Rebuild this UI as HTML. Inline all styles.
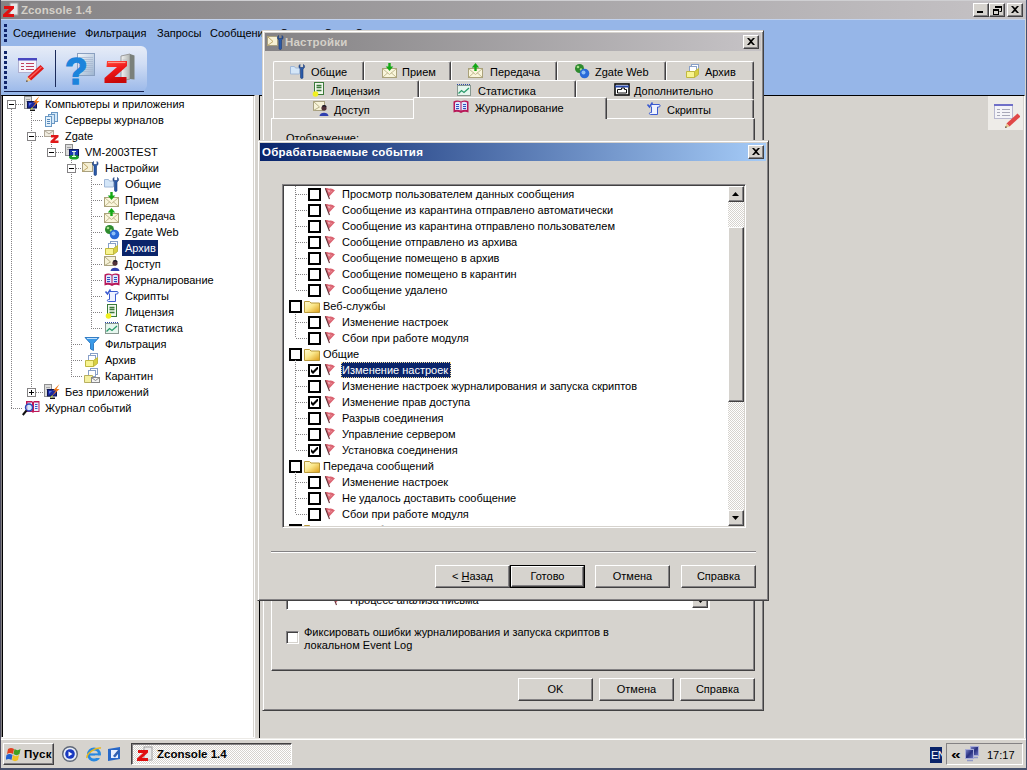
<!DOCTYPE html>
<html lang="ru"><head><meta charset="utf-8"><title>Zconsole 1.4</title>
<style>
html,body{margin:0;padding:0}
body{width:1027px;height:770px;overflow:hidden;position:relative;background:#d6d3ce;font-family:"Liberation Sans",sans-serif;font-size:11px;color:#000}
body div{position:absolute;box-sizing:border-box}
.t{white-space:nowrap;line-height:16px;height:16px}
.ic{line-height:0}
.ic svg{display:block}
.win{background:#d6d3ce;border:1px solid;border-color:#d6d3ce #424142 #424142 #d6d3ce;box-shadow:inset 1px 1px 0 #ffffff, inset -1px -1px 0 #848284;}
.btn{background:#d6d3ce;border:1px solid;border-color:#ffffff #424142 #424142 #ffffff;box-shadow:inset -1px -1px 0 #848284;text-align:center;line-height:20px;white-space:nowrap}
.btn.def{border-color:#000;box-shadow:none}
.btn.def .btnin{left:0;top:0;right:0;bottom:0;border:1px solid;border-color:#ffffff #424142 #424142 #ffffff;box-shadow:inset -1px -1px 0 #848284;line-height:18px}
.capbtn{background:#d6d3ce;border:1px solid;border-color:#ffffff #424142 #424142 #ffffff;box-shadow:inset -1px -1px 0 #848284;}
.capbtn svg{position:absolute;left:3px;top:2px}
.tab{background:#d6d3ce;border:1px solid;border-color:#ffffff #424142 transparent #ffffff;border-bottom:none;border-radius:2px 2px 0 0;box-shadow:inset -1px 0 0 #848284;}
.tab.sel{z-index:2}
.exp{width:9px;height:9px;border:1px solid #848284;background:#fff;z-index:1}
.exp .h{position:absolute;left:1px;top:3px;width:5px;height:1px;background:#000}
.exp .v{position:absolute;left:3px;top:1px;width:1px;height:5px;background:#000}
.hd{height:1px;background-image:linear-gradient(90deg,#848284 50%,transparent 50%);background-size:2px 1px}
.vd{width:1px;background-image:linear-gradient(180deg,#848284 50%,transparent 50%);background-size:1px 2px}
.grip{width:3px;background-image:linear-gradient(180deg,#10246a 0,#10246a 3px,transparent 3px);background-size:3px 5px}
.cb{width:13px;height:13px;border:2px solid #000;background:#fff}
.clip{overflow:hidden}
</style></head>
<body>
<div style="left:0px;top:0px;width:1027px;height:19px;background:linear-gradient(90deg,#848284 0%,#c6c3c6 100%);"></div>
<div style="left:0px;top:0px;width:1027px;height:1px;background:#cfcfd2"></div>
<div class="ic" style="left:3px;top:2px"><svg width="16" height="16" viewBox="0 0 16 16"><rect x="7" y="1" width="8" height="12" fill="#e8e8e8" stroke="#a0a0a0"/><path d="M1 4h10v2.500l-6 5.500h6v3H0v-2.500l6-5.500H1z" fill="#e01010"/></svg></div>
<div class="t" style="left:21px;top:2px;color:#d4d0c8;font-weight:bold;font-size:11.5px;letter-spacing:0.1px">Zconsole 1.4</div>
<div class="capbtn" style="left:973px;top:3px;width:16px;height:14px"><svg width="8" height="7" viewBox="0 0 8 7"><rect x="0" y="5" width="6" height="2" fill="#000"/></svg></div>
<div class="capbtn" style="left:989px;top:3px;width:16px;height:14px"><svg width="9" height="9" viewBox="0 0 9 9"><path d="M2.500 0.500h6v5h-2" fill="none" stroke="#000"/><path d="M2 1h7" stroke="#000" stroke-width="2"/><rect x="0.500" y="3.500" width="5" height="5" fill="none" stroke="#000"/><path d="M0 4h6" stroke="#000" stroke-width="2"/></svg></div>
<div class="capbtn" style="left:1007px;top:3px;width:16px;height:14px"><svg width="8" height="7" viewBox="0 0 8 7"><path d="M0 0h2l2 2l2-2h2l-3 3.500l3 3.500h-2l-2-2l-2 2h-2l3-3.500z" fill="#000"/></svg></div>
<div style="left:0px;top:19px;width:1025px;height:76px;background:#96b6e8"></div>
<div style="left:1025px;top:20px;width:2px;height:720px;background:#d6d3ce"></div>
<div class="grip" style="left:4px;top:24px;height:20px"></div>
<div class="t" style="left:13px;top:25px;color:#000">Соединение</div>
<div class="t" style="left:85px;top:25px;color:#000">Фильтрация</div>
<div class="t" style="left:157px;top:25px;color:#000">Запросы</div>
<div class="t" style="left:210px;top:25px;color:#000">Сообщения</div>
<div class="t" style="left:280px;top:25px;color:#000">Сервис</div>
<div class="t" style="left:324px;top:25px;color:#000">Окно</div>
<div class="t" style="left:355px;top:25px;color:#000">Справка</div>
<div style="left:1px;top:46px;width:146px;height:45px;border-radius:0 6px 6px 0;background:linear-gradient(180deg,#e6ecf7 0%,#d0ddf4 40%,#b6cbee 70%,#9dbaea 100%);"></div>
<div style="left:4px;top:91px;width:140px;height:1px;background:#14204e"></div>
<div class="grip" style="left:4px;top:51px;height:40px"></div>
<div style="left:55px;top:50px;width:1px;height:37px;background:#1a2a5a"></div>
<div class="ic" style="left:16px;top:56px"><svg width="30" height="28" viewBox="0 0 30 28"><rect x="2.500" y="2.500" width="18" height="14" fill="#f4f4fc" stroke="#b0b0d0"/><rect x="2" y="2" width="19" height="2.500" fill="#4848c0"/><path d="M5 7.500h3M10 7.500h8M5 10.500h3M10 10.500h8M5 13.500h3M10 13.500h8" stroke="#c04060" stroke-width="1.200"/><path d="M24.500 9l3.500 3.500l-13 12l-3.500-3.500z" fill="#e01818"/><path d="M25 10.500l1 1l-12 11l-1-1z" fill="#f86060"/><path d="M11.500 21l3.500 3.500l-5 1.500z" fill="#f0c890"/><path d="M10 26l0.800-2l1.200 1.200z" fill="#303030"/></svg></div>
<div class="ic" style="left:64px;top:50px"><svg width="34" height="36" viewBox="0 0 34 36"><defs><linearGradient id="pg" x1="0" y1="0" x2="1" y2="1"><stop offset="0" stop-color="#f4f8fc"/><stop offset="1" stop-color="#9cb4d0"/></linearGradient></defs><rect x="13.500" y="3.500" width="17" height="22" fill="url(#pg)" stroke="#8aa0c0"/><path d="M15 7.500h14M15 9.500h14M15 11.500h14M15 13.500h14M15 15.500h14M15 17.500h14M15 19.500h14M15 21.500h14" stroke="#a8b8d0" stroke-width="0.800"/><text x="1" y="34" font-family="Liberation Sans, sans-serif" font-weight="bold" font-size="37" fill="#1c84dc" stroke="#1c84dc" stroke-width="1.300">?</text></svg></div>
<div class="ic" style="left:103px;top:52px"><svg width="34" height="34" viewBox="0 0 34 34"><defs><linearGradient id="sg" x1="0" y1="0" x2="1" y2="0"><stop offset="0" stop-color="#f4f4f4"/><stop offset="1" stop-color="#b0b4b0"/></linearGradient><linearGradient id="zg" x1="0" y1="0" x2="0.300" y2="1"><stop offset="0" stop-color="#ff4a3a"/><stop offset="0.500" stop-color="#f01818"/><stop offset="1" stop-color="#c80808"/></linearGradient></defs><path d="M18 4l9-2v25l-9 2z" fill="url(#sg)" stroke="#9a9a9a"/><path d="M27 2l4.500 1.500v24l-4.500-0.500z" fill="#7a807a"/><path d="M19.500 8h6M19.500 11h6M19.500 14h6M19.500 17h6" stroke="#c0c4c8"/><path d="M4 9h20v5l-12.500 11h12v6H1.500v-5l12.500-11H3.500z" fill="url(#zg)"/><path d="M5 10.500h17.500" stroke="#ff9a8a" stroke-width="1.200"/></svg></div>
<div style="left:0px;top:95px;width:255px;height:643px;background:#fff;border:1px solid #848284;border-top-color:#000;border-left-width:2px;border-right-color:#ffffff;border-bottom-color:#ffffff;box-shadow:inset 1px 0 0 #000, inset -1px 0 0 #d6d3ce;"></div>
<div style="left:0px;top:19px;width:1025px;height:1px;background:#c3d3ee"></div>
<div style="left:0px;top:0px;width:1px;height:770px;background:#4a4a5c;z-index:5"></div>
<div class="hd" style="left:16px;top:104px;width:7px"></div>
<div class="ic" style="left:24px;top:96px"><svg width="16" height="16" viewBox="0 0 16 16"><rect x="0.500" y="0.500" width="7" height="12" fill="#dcdcdc" stroke="#909090"/><path d="M2 3.500h4M2 5.500h4" stroke="#a8a8a8"/><rect x="3.500" y="5.500" width="9" height="6.500" fill="#1828a0" stroke="#0c1450"/><path d="M5 7l3 0l-3 3z" fill="#5a78e0"/><path d="M6 13.500h5v1.500H6z" fill="#181818"/><path d="M15.500 0l-6.500 6.500h3l-4.500 6l8-7.500h-3z" fill="#f07818"/><path d="M8.500 11.500l-1.500 2" stroke="#c8e040" stroke-width="1.200"/></svg></div>
<div class="t" style="left:45px;top:96px;">Компьютеры и приложения</div>
<div class="exp" style="left:7px;top:100px"><i class="h"></i></div>
<div class="hd" style="left:31px;top:120px;width:12px"></div>
<div class="ic" style="left:44px;top:112px"><svg width="16" height="16" viewBox="0 0 16 16"><rect x="7.500" y="0.500" width="6" height="9" fill="#d4e8f8" stroke="#6a98c4"/><rect x="4.500" y="2.500" width="6" height="9" fill="#d4e8f8" stroke="#6a98c4"/><rect x="1.500" y="4.500" width="6" height="10" fill="#e4f2fc" stroke="#6a98c4"/><path d="M3 7.500h3M3 9.500h3M3 11.500h3" stroke="#5888b8"/></svg></div>
<div class="t" style="left:65px;top:112px;">Серверы журналов</div>
<div class="hd" style="left:36px;top:136px;width:7px"></div>
<div class="ic" style="left:44px;top:128px"><svg width="16" height="16" viewBox="0 0 16 16"><rect x="0.500" y="2.500" width="9" height="6" fill="#f0ece0" stroke="#b0a898"/><path d="M0.500 2.500l4.500 3.500l4.500-3.500" fill="none" stroke="#b0a898"/><path d="M7 7h7.500v2l-4 3.500h4v2.500h-8v-2l4-3.500H7z" fill="#e01818"/></svg></div>
<div class="t" style="left:65px;top:128px;">Zgate</div>
<div class="exp" style="left:27px;top:132px"><i class="h"></i></div>
<div class="hd" style="left:56px;top:152px;width:7px"></div>
<div class="ic" style="left:64px;top:144px"><svg width="16" height="16" viewBox="0 0 16 16"><rect x="1.500" y="0.500" width="7" height="11" fill="#dcdcdc" stroke="#8c8c8c"/><path d="M3 3.500h4M3 5.500h4" stroke="#a0a0a0"/><rect x="5.500" y="5.500" width="9" height="6.500" fill="#1838b0" stroke="#0c1858"/><ellipse cx="10" cy="13.300" rx="4.800" ry="2.300" fill="#18a028"/><path d="M10 7.500v5M8 7.500h4M8 12.500h4" stroke="#e8ffe8" stroke-width="1.200"/></svg></div>
<div class="t" style="left:85px;top:144px;">VM-2003TEST</div>
<div class="exp" style="left:47px;top:148px"><i class="h"></i></div>
<div class="hd" style="left:76px;top:168px;width:7px"></div>
<div class="ic" style="left:82px;top:160px"><svg width="18" height="16" viewBox="0 0 18 16"><rect x="0.500" y="2.500" width="10" height="9" fill="#f6f0d4" stroke="#a8a080"/><path d="M0.500 2.500l5.500 5M0.500 11.500l5.500-4" fill="none" stroke="#c0a868"/><path d="M11.500 1.500c-1.500 1-1.500 3.500 0.500 4.500v8.500c0 1.300 2.500 1.300 2.500 0v-8.500c2-1 2-3.500 0.500-4.500v3h-3.500z" fill="#2a5aa8" stroke="#1a3a78" stroke-width="0.600"/></svg></div>
<div class="t" style="left:105px;top:160px;">Настройки</div>
<div class="exp" style="left:67px;top:164px"><i class="h"></i></div>
<div class="hd" style="left:91px;top:184px;width:12px"></div>
<div class="ic" style="left:104px;top:176px"><svg width="16" height="16" viewBox="0 0 16 16"><path d="M0.500 3.500h4l1 1.500h4v6h-9z" fill="#d4e6f8" stroke="#a0b8d8"/><path d="M10 1.500c-1.500 1-1.500 3.500 0.500 4.500v8.500c0 1.300 2.500 1.300 2.500 0v-8.500c2-1 2-3.500 0.500-4.500v3h-3.500z" fill="#2a5aa8" stroke="#1a3a78" stroke-width="0.600"/></svg></div>
<div class="t" style="left:125px;top:176px;">Общие</div>
<div class="hd" style="left:91px;top:200px;width:12px"></div>
<div class="ic" style="left:104px;top:192px"><svg width="16" height="16" viewBox="0 0 16 16"><rect x="0.500" y="5.500" width="14" height="9" fill="#faf6dc" stroke="#aaa27a"/><path d="M1 6l6.500 5.500l6.500-5.500M1 14l5-4.500M14 14l-5-4.500" fill="none" stroke="#c4bc94"/><path d="M7.500 0v5" stroke="#14a814" stroke-width="2.400"/><path d="M3.800 3.500h7.400l-3.700 4.500z" fill="#14a814"/></svg></div>
<div class="t" style="left:125px;top:192px;">Прием</div>
<div class="hd" style="left:91px;top:216px;width:12px"></div>
<div class="ic" style="left:104px;top:208px"><svg width="16" height="16" viewBox="0 0 16 16"><rect x="0.500" y="5.500" width="14" height="9" fill="#faf6dc" stroke="#aaa27a"/><path d="M1 6l6.500 5.500l6.500-5.500M1 14l5-4.500M14 14l-5-4.500" fill="none" stroke="#c4bc94"/><path d="M7.500 3v5" stroke="#14a814" stroke-width="2.400"/><path d="M3.800 4.500h7.400l-3.700-4.500z" fill="#14a814"/></svg></div>
<div class="t" style="left:125px;top:208px;">Передача</div>
<div class="hd" style="left:91px;top:232px;width:12px"></div>
<div class="ic" style="left:104px;top:224px"><svg width="16" height="16" viewBox="0 0 16 16"><circle cx="5.5" cy="5.5" r="4.5" fill="#2e8a2e"/><circle cx="4" cy="4" r="1.3" fill="#a8e08a"/><circle cx="7" cy="6.5" r="1.2" fill="#a8e08a"/><circle cx="10.5" cy="10.5" r="4.8" fill="#2a6ad8"/><circle cx="9.5" cy="9.5" r="2" fill="#8ec0f8"/></svg></div>
<div class="t" style="left:125px;top:224px;">Zgate Web</div>
<div class="hd" style="left:91px;top:248px;width:12px"></div>
<div class="ic" style="left:104px;top:240px"><svg width="16" height="16" viewBox="0 0 16 16"><rect x="6.5" y="1.5" width="7" height="6" fill="#fff" stroke="#88a0c8"/><rect x="4.5" y="3.5" width="7" height="6" fill="#fff" stroke="#88a0c8"/><path d="M1.5 8.5h8v6h-8z" fill="#f8f490" stroke="#c0b840"/><path d="M9.5 8.5l4-3v6l-4 3z" fill="#d8d040" stroke="#c0b840"/></svg></div>
<div style="left:122px;top:240px;width:36px;height:16px;background:#0a246a"></div>
<div class="t" style="left:125px;top:240px;color:#fff">Архив</div>
<div class="hd" style="left:91px;top:264px;width:12px"></div>
<div class="ic" style="left:104px;top:256px"><svg width="16" height="16" viewBox="0 0 16 16"><rect x="0.500" y="0.500" width="11" height="9" fill="#f6f2d8" stroke="#a8a080"/><path d="M0.500 0.500l6 5.500M0.500 9.500l6-3.500" fill="none" stroke="#b8b088"/><circle cx="11" cy="7" r="2.600" fill="#503038"/><path d="M9.500 5.500c1-1.500 3-1 3.500 0.500" stroke="#181828" fill="none" stroke-width="1.400"/><path d="M6.500 15c0-4.500 9-4.500 9 0z" fill="#3040b0"/></svg></div>
<div class="t" style="left:125px;top:256px;">Доступ</div>
<div class="hd" style="left:91px;top:280px;width:12px"></div>
<div class="ic" style="left:104px;top:272px"><svg width="16" height="16" viewBox="0 0 16 16"><path d="M0.500 2.500c2.500-1.500 5-1.500 7.500 0c2.500-1.500 5-1.500 7.500 0v11c-2.500-1-5-1-7.500 0.500c-2.500-1.500-5-1.500-7.500-0.500z" fill="#b81858"/><path d="M2 3.500c2-1 4-1 5.500 0v8c-1.500-1-3.500-1-5.500-0.500zM14 3.500c-2-1-4-1-5.500 0v8c1.500-1 3.500-1 5.500-0.500z" fill="#dce8ff"/><path d="M3 5.500h3M3 7.500h3M3 9.500h3M10 5.500h3M10 7.500h3M10 9.500h3" stroke="#3050c0"/></svg></div>
<div class="t" style="left:125px;top:272px;">Журналирование</div>
<div class="hd" style="left:91px;top:296px;width:12px"></div>
<div class="ic" style="left:104px;top:288px"><svg width="16" height="16" viewBox="0 0 16 16"><path d="M5 3.500h8c1.500 0 1.500 2.500 0 2.500h-1.500v7.500h-7c-1.500 0-1.500-2 0-2h1v-6" fill="#eef2ff" stroke="#3a5ad0"/><path d="M1.500 3.500l2 2.500l3-4.500" fill="none" stroke="#3a5ad0" stroke-width="1.600"/></svg></div>
<div class="t" style="left:125px;top:288px;">Скрипты</div>
<div class="hd" style="left:91px;top:312px;width:12px"></div>
<div class="ic" style="left:104px;top:304px"><svg width="16" height="16" viewBox="0 0 16 16"><rect x="3.500" y="0.500" width="9" height="12" fill="#f2f8ee" stroke="#3a7a3a"/><path d="M5.500 3.500h5M5.500 5.500h5M5.500 8.500h5" stroke="#3a7a3a" stroke-width="1.500"/><circle cx="4.500" cy="12" r="2.800" fill="#f0f020"/></svg></div>
<div class="t" style="left:125px;top:304px;">Лицензия</div>
<div class="hd" style="left:91px;top:328px;width:12px"></div>
<div class="ic" style="left:104px;top:320px"><svg width="16" height="16" viewBox="0 0 16 16"><rect x="1.500" y="3.500" width="13" height="10" fill="#e6f6ee" stroke="#889890"/><path d="M1 2.500h14" stroke="#2848a8" stroke-dasharray="1 1"/><path d="M2.500 11.500l3-3l2.500 2l5-4.500" fill="none" stroke="#2a9a6a" stroke-width="1.300"/></svg></div>
<div class="t" style="left:125px;top:320px;">Статистика</div>
<div class="hd" style="left:71px;top:344px;width:12px"></div>
<div class="ic" style="left:84px;top:336px"><svg width="16" height="16" viewBox="0 0 16 16"><path d="M1 1.500h14l-5.500 6v7l-3-1.500v-5.500z" fill="#3a9ae8" stroke="#1a6ab8" stroke-width="0.800"/><path d="M3 2.500h10" stroke="#bfe0ff"/></svg></div>
<div class="t" style="left:105px;top:336px;">Фильтрация</div>
<div class="hd" style="left:71px;top:360px;width:12px"></div>
<div class="ic" style="left:84px;top:352px"><svg width="16" height="16" viewBox="0 0 16 16"><rect x="6.5" y="1.5" width="7" height="6" fill="#fff" stroke="#88a0c8"/><rect x="4.5" y="3.5" width="7" height="6" fill="#fff" stroke="#88a0c8"/><path d="M1.5 8.5h8v6h-8z" fill="#f8f490" stroke="#c0b840"/><path d="M9.5 8.5l4-3v6l-4 3z" fill="#d8d040" stroke="#c0b840"/></svg></div>
<div class="t" style="left:105px;top:352px;">Архив</div>
<div class="hd" style="left:71px;top:376px;width:12px"></div>
<div class="ic" style="left:84px;top:368px"><svg width="16" height="16" viewBox="0 0 16 16"><rect x="6.500" y="0.500" width="7" height="6" fill="#fff" stroke="#88a0c8"/><rect x="4.500" y="2.500" width="7" height="6" fill="#fff" stroke="#88a0c8"/><path d="M0.500 7.500h8v7h-8z" fill="#f4f0a0" stroke="#b8b060"/><rect x="7.500" y="9.500" width="8" height="5" fill="#f4f4f4" stroke="#888"/><path d="M7.500 9.500l4 3l4-3" fill="none" stroke="#888"/></svg></div>
<div class="t" style="left:105px;top:368px;">Карантин</div>
<div class="hd" style="left:36px;top:392px;width:7px"></div>
<div class="ic" style="left:44px;top:384px"><svg width="16" height="16" viewBox="0 0 16 16"><rect x="0.500" y="0.500" width="7" height="12" fill="#dcdcdc" stroke="#909090"/><path d="M2 3.500h4M2 5.500h4" stroke="#a8a8a8"/><rect x="3.500" y="5.500" width="9" height="6.500" fill="#1828a0" stroke="#0c1450"/><path d="M5 7l3 0l-3 3z" fill="#5a78e0"/><path d="M6 13.500h5v1.500H6z" fill="#181818"/><path d="M15.500 0l-6.500 6.500h3l-4.500 6l8-7.500h-3z" fill="#f07818"/><path d="M8.500 11.500l-1.500 2" stroke="#c8e040" stroke-width="1.200"/></svg></div>
<div class="t" style="left:65px;top:384px;">Без приложений</div>
<div class="exp" style="left:27px;top:388px"><i class="h"></i><i class="v"></i></div>
<div class="hd" style="left:11px;top:408px;width:12px"></div>
<div class="ic" style="left:22px;top:400px"><svg width="18" height="16" viewBox="0 0 18 16"><path d="M4 1h6l1 1l1-1h5.500v11H12l-1 1l-1-1H4z" fill="#c01858"/><path d="M5.500 2.500h4.500v8.500H5.500zM12 2.500h4.500v8.500H12z" fill="#e8f0ff"/><path d="M13 4.500h2.500M13 6.500h2.500M13 8.500h2.500" stroke="#3858c8"/><circle cx="7" cy="7.500" r="3.500" fill="#cfe4ff" fill-opacity="0.700" stroke="#2848b8" stroke-width="1.400"/><path d="M4.500 10.500L0.800 15" stroke="#101010" stroke-width="2"/></svg></div>
<div class="t" style="left:45px;top:400px;">Журнал событий</div>
<div class="vd" style="left:11px;top:109px;height:299px"></div>
<div class="vd" style="left:31px;top:112px;height:280px"></div>
<div class="vd" style="left:51px;top:144px;height:8px"></div>
<div class="vd" style="left:71px;top:160px;height:216px"></div>
<div class="vd" style="left:91px;top:176px;height:152px"></div>
<div style="left:259px;top:95px;width:766px;height:643px;background:#d6d3ce;border-left:1px solid #000;border-top:1px solid #000;border-right:1px solid #fff;"></div>
<div style="left:260px;top:96px;width:2px;height:641px;background:#848284;opacity:0"></div>
<div style="left:988px;top:96px;width:35px;height:34px;background:#eeece8"></div>
<div class="ic" style="left:992px;top:102px"><svg width="28" height="26" viewBox="0 0 28 26"><rect x="2.500" y="2.500" width="18" height="14" fill="#f4f4f8" stroke="#b8b8d0"/><rect x="2" y="2" width="19" height="2" fill="#7070c8"/><path d="M5 7.500h3M10 7.500h8M5 10.500h3M10 10.500h8M5 13.500h3M10 13.500h8" stroke="#a8a8b8"/><path d="M25.500 11.500l3 3l-11 10l-3-3z" fill="#e04848"/><path d="M14.500 21.500l3 3l-4.500 1.500z" fill="#e8c890"/><path d="M13 26l0.800-2l1.200 1.200z" fill="#403020"/></svg></div>
<div style="left:0px;top:738px;width:1027px;height:32px;background:#d6d3ce"></div>
<div style="left:0px;top:738px;width:1027px;height:1px;background:#eceae6"></div>
<div style="left:0px;top:739px;width:1027px;height:1px;background:#fff"></div>
<div style="left:0px;top:768px;width:1027px;height:2px;background:#46506c"></div>
<div style="left:1026px;top:0px;width:1px;height:770px;background:#46506c"></div>
<div class="btn" style="left:3px;top:743px;width:51px;height:22px"></div>
<div class="ic" style="left:6px;top:746px"><svg width="16" height="16" viewBox="0 0 16 16"><path d="M1 3c2-1.500 4-1.500 6 0l-1 5c-2-1.500-4-1.500-6 0z" fill="#e04020" transform="translate(1,0)"/><path d="M8.500 3c2 1.500 4 1.500 6 0l-1 5c-2 1.500-4 1.500-6 0z" fill="#40a020"/><path d="M0.500 9c2-1.500 4-1.500 6 0l-1 5c-2-1.500-4-1.500-6 0z" fill="#2060d0"/><path d="M7 9c2 1.500 4 1.500 6 0l-1 5c-2 1.500-4 1.500-6 0z" fill="#f0c020"/></svg></div>
<div class="t" style="left:24px;top:746px;font-weight:bold;font-size:11.5px;letter-spacing:0.3px">Пуск</div>
<div class="ic" style="left:62px;top:746px"><svg width="16" height="16" viewBox="0 0 16 16"><circle cx="8" cy="8" r="7.300" fill="#e8eef8" stroke="#606878" stroke-width="1.400"/><circle cx="8" cy="8" r="4.800" fill="#1838c0"/><path d="M6.500 5.500l4 2.500l-4 2.500z" fill="#fff"/></svg></div>
<div class="ic" style="left:86px;top:746px"><svg width="16" height="16" viewBox="0 0 16 16"><circle cx="8" cy="8.500" r="5.500" fill="none" stroke="#2888e0" stroke-width="3"/><path d="M3 8.500h10" stroke="#2888e0" stroke-width="2.200"/><rect x="9" y="9.500" width="6" height="2.500" fill="#d4d0c8"/><path d="M1 12c-1-4 8-11 14-10" fill="none" stroke="#e8b820" stroke-width="1.500"/></svg></div>
<div class="ic" style="left:107px;top:746px"><svg width="16" height="16" viewBox="0 0 16 16"><path d="M1 3l12-2v12l-12 2z" fill="#2868c8"/><rect x="4" y="4" width="7" height="8" fill="#e8f0ff"/><path d="M6 10l5-6l2 1.500l-5 6z" fill="#3060b0"/></svg></div>
<div style="left:131px;top:743px;width:161px;height:22px;background-color:#ebe9e4;background-image:repeating-conic-gradient(#fff 0% 25%, #d6d3ce 0% 50%);background-size:2px 2px;border:1px solid;border-color:#424142 #ffffff #ffffff #424142;box-shadow:inset 1px 1px 0 #848284;"></div>
<div class="ic" style="left:137px;top:746px"><svg width="16" height="16" viewBox="0 0 16 16"><rect x="7" y="1" width="8" height="13" fill="#e8e8e8" stroke="#a0a0a0"/><path d="M1 4h10v2.500l-6 5.500h6v3H0v-2.500l6-5.500H1z" fill="#e01010"/></svg></div>
<div class="t" style="left:157px;top:746px;font-weight:bold;font-size:11.5px">Zconsole 1.4</div>
<div style="left:930px;top:747px;width:12px;height:16px;background:#0a246a"></div>
<div class="t" style="left:931px;top:747px;color:#fff;font-size:11px;letter-spacing:-0.5px;width:11px;overflow:hidden">EN</div>
<div style="left:946px;top:743px;width:77px;height:22px;border:1px solid;border-color:#848284 #ffffff #ffffff #848284;"></div>
<div class="t" style="left:951px;top:747px;font-weight:bold;font-size:13px;transform:scaleX(1.350);transform-origin:0 50%">«</div>
<div class="ic" style="left:964px;top:746px"><svg width="16" height="16" viewBox="0 0 16 16"><defs><linearGradient id="tg" x1="0" y1="0" x2="1" y2="1"><stop offset="0" stop-color="#8088c8"/><stop offset="0.500" stop-color="#283080"/><stop offset="1" stop-color="#7078c0"/></linearGradient></defs><rect x="6.500" y="0.500" width="8" height="9" fill="url(#tg)" stroke="#a8acd8"/><rect x="1.500" y="3.500" width="8" height="9" fill="url(#tg)" stroke="#a8acd8"/><path d="M3 14.500h6M10 11.500h4" stroke="#9098c8" stroke-width="1.500"/></svg></div>
<div class="t" style="left:987px;top:747px;font-size:11px">17:17</div>
<div class="win" style="left:262px;top:30px;width:502px;height:681px">
</div>
<div style="left:265px;top:33px;width:496px;height:18px;background:linear-gradient(90deg,#848284,#c6c3c6)"></div>
<div class="ic" style="left:267px;top:34px"><svg width="18" height="16" viewBox="0 0 18 16"><rect x="0.500" y="2.500" width="10" height="9" fill="#f6f0d4" stroke="#a8a080"/><path d="M0.500 2.500l5.500 5M0.500 11.500l5.500-4" fill="none" stroke="#c0a868"/><path d="M11.500 1.500c-1.500 1-1.500 3.500 0.500 4.500v8.500c0 1.300 2.500 1.300 2.500 0v-8.500c2-1 2-3.500 0.500-4.500v3h-3.500z" fill="#2a5aa8" stroke="#1a3a78" stroke-width="0.600"/></svg></div>
<div class="t" style="left:285px;top:34px;color:#d4d0c8;font-weight:bold;font-size:11.5px;letter-spacing:0.2px">Настройки</div>
<div class="capbtn" style="left:743px;top:35px;width:16px;height:14px"><svg width="8" height="7" viewBox="0 0 8 7"><path d="M0 0h2l2 2l2-2h2l-3 3.500l3 3.500h-2l-2-2l-2 2h-2l3-3.500z" fill="#000"/></svg></div>
<div style="left:271px;top:118px;width:484px;height:553px;border:1px solid;border-color:#ffffff #424142 #424142 #ffffff;box-shadow:inset -1px -1px 0 #848284;"></div>
<div class="tab" style="left:273px;top:61px;width:91px;height:19px"></div>
<div class="ic" style="left:290px;top:63px"><svg width="16" height="16" viewBox="0 0 16 16"><path d="M0.500 3.500h4l1 1.500h4v6h-9z" fill="#d4e6f8" stroke="#a0b8d8"/><path d="M10 1.500c-1.500 1-1.500 3.500 0.500 4.500v8.500c0 1.300 2.500 1.300 2.500 0v-8.500c2-1 2-3.500 0.500-4.500v3h-3.500z" fill="#2a5aa8" stroke="#1a3a78" stroke-width="0.600"/></svg></div>
<div class="t" style="left:311px;top:64px;">Общие</div>
<div class="tab" style="left:364px;top:61px;width:87px;height:19px"></div>
<div class="ic" style="left:382px;top:63px"><svg width="16" height="16" viewBox="0 0 16 16"><rect x="0.500" y="5.500" width="14" height="9" fill="#faf6dc" stroke="#aaa27a"/><path d="M1 6l6.500 5.500l6.500-5.500M1 14l5-4.500M14 14l-5-4.500" fill="none" stroke="#c4bc94"/><path d="M7.500 0v5" stroke="#14a814" stroke-width="2.400"/><path d="M3.800 3.500h7.400l-3.700 4.500z" fill="#14a814"/></svg></div>
<div class="t" style="left:402px;top:64px;">Прием</div>
<div class="tab" style="left:451px;top:61px;width:106px;height:19px"></div>
<div class="ic" style="left:468px;top:63px"><svg width="16" height="16" viewBox="0 0 16 16"><rect x="0.500" y="5.500" width="14" height="9" fill="#faf6dc" stroke="#aaa27a"/><path d="M1 6l6.500 5.500l6.500-5.500M1 14l5-4.500M14 14l-5-4.500" fill="none" stroke="#c4bc94"/><path d="M7.500 3v5" stroke="#14a814" stroke-width="2.400"/><path d="M3.800 4.500h7.400l-3.700-4.500z" fill="#14a814"/></svg></div>
<div class="t" style="left:490px;top:64px;">Передача</div>
<div class="tab" style="left:557px;top:61px;width:109px;height:19px"></div>
<div class="ic" style="left:574px;top:63px"><svg width="16" height="16" viewBox="0 0 16 16"><circle cx="5.5" cy="5.5" r="4.5" fill="#2e8a2e"/><circle cx="4" cy="4" r="1.3" fill="#a8e08a"/><circle cx="7" cy="6.5" r="1.2" fill="#a8e08a"/><circle cx="10.5" cy="10.5" r="4.8" fill="#2a6ad8"/><circle cx="9.5" cy="9.5" r="2" fill="#8ec0f8"/></svg></div>
<div class="t" style="left:595px;top:64px;">Zgate Web</div>
<div class="tab" style="left:666px;top:61px;width:88px;height:19px"></div>
<div class="ic" style="left:685px;top:63px"><svg width="16" height="16" viewBox="0 0 16 16"><rect x="6.5" y="1.5" width="7" height="6" fill="#fff" stroke="#88a0c8"/><rect x="4.5" y="3.5" width="7" height="6" fill="#fff" stroke="#88a0c8"/><path d="M1.5 8.5h8v6h-8z" fill="#f8f490" stroke="#c0b840"/><path d="M9.5 8.5l4-3v6l-4 3z" fill="#d8d040" stroke="#c0b840"/></svg></div>
<div class="t" style="left:705px;top:64px;">Архив</div>
<div class="tab" style="left:273px;top:80px;width:146px;height:19px"></div>
<div class="ic" style="left:311px;top:82px"><svg width="16" height="16" viewBox="0 0 16 16"><rect x="3.500" y="0.500" width="9" height="12" fill="#f2f8ee" stroke="#3a7a3a"/><path d="M5.500 3.500h5M5.500 5.500h5M5.500 8.500h5" stroke="#3a7a3a" stroke-width="1.500"/><circle cx="4.500" cy="12" r="2.800" fill="#f0f020"/></svg></div>
<div class="t" style="left:331px;top:83px;">Лицензия</div>
<div class="tab" style="left:419px;top:80px;width:157px;height:19px"></div>
<div class="ic" style="left:456px;top:82px"><svg width="16" height="16" viewBox="0 0 16 16"><rect x="1.500" y="3.500" width="13" height="10" fill="#e6f6ee" stroke="#889890"/><path d="M1 2.500h14" stroke="#2848a8" stroke-dasharray="1 1"/><path d="M2.500 11.500l3-3l2.500 2l5-4.500" fill="none" stroke="#2a9a6a" stroke-width="1.300"/></svg></div>
<div class="t" style="left:478px;top:83px;">Статистика</div>
<div class="tab" style="left:576px;top:80px;width:178px;height:19px"></div>
<div class="ic" style="left:614px;top:82px"><svg width="16" height="16" viewBox="0 0 16 16"><rect x="1" y="2" width="14" height="11" fill="#fff" stroke="#101010" stroke-width="1.600"/><path d="M1 4.500h14" stroke="#2848a8" stroke-width="2"/><path d="M3.500 7.500h4v-1.500h3v1.500h2v3.500h-9z" fill="none" stroke="#101010"/></svg></div>
<div class="t" style="left:634px;top:83px;">Дополнительно</div>
<div class="tab" style="left:273px;top:99px;width:143px;height:19px"></div>
<div class="ic" style="left:313px;top:101px"><svg width="16" height="16" viewBox="0 0 16 16"><rect x="0.500" y="0.500" width="11" height="9" fill="#f6f2d8" stroke="#a8a080"/><path d="M0.500 0.500l6 5.500M0.500 9.500l6-3.500" fill="none" stroke="#b8b088"/><circle cx="11" cy="7" r="2.600" fill="#503038"/><path d="M9.500 5.500c1-1.500 3-1 3.500 0.500" stroke="#181828" fill="none" stroke-width="1.400"/><path d="M6.500 15c0-4.500 9-4.500 9 0z" fill="#3040b0"/></svg></div>
<div class="t" style="left:334px;top:102px;">Доступ</div>
<div class="tab" style="left:604px;top:99px;width:150px;height:19px"></div>
<div class="ic" style="left:646px;top:101px"><svg width="16" height="16" viewBox="0 0 16 16"><path d="M5 3.500h8c1.500 0 1.500 2.500 0 2.500h-1.500v7.500h-7c-1.500 0-1.500-2 0-2h1v-6" fill="#eef2ff" stroke="#3a5ad0"/><path d="M1.500 3.500l2 2.500l3-4.500" fill="none" stroke="#3a5ad0" stroke-width="1.600"/></svg></div>
<div class="t" style="left:667px;top:102px;">Скрипты</div>
<div class="tab sel" style="left:413px;top:97px;width:194px;height:22px"></div>
<div class="ic" style="z-index:3;left:453px;top:99px"><svg width="16" height="16" viewBox="0 0 16 16"><path d="M0.500 2.500c2.500-1.500 5-1.500 7.500 0c2.500-1.500 5-1.500 7.500 0v11c-2.500-1-5-1-7.500 0.500c-2.500-1.500-5-1.500-7.500-0.500z" fill="#b81858"/><path d="M2 3.500c2-1 4-1 5.500 0v8c-1.500-1-3.500-1-5.500-0.500zM14 3.500c-2-1-4-1-5.500 0v8c1.500-1 3.500-1 5.500-0.500z" fill="#dce8ff"/><path d="M3 5.500h3M3 7.500h3M3 9.500h3M10 5.500h3M10 7.500h3M10 9.500h3" stroke="#3050c0"/></svg></div>
<div class="t" style="left:475px;top:100px;z-index:3">Журналирование</div>
<div class="t" style="left:286px;top:130px;">Отображение:</div>
<div style="left:286px;top:590px;width:424px;height:20px;background:#fff;border:1px solid;border-color:#848284 #ffffff #ffffff #848284;box-shadow:inset 1px 1px 0 #424142;"></div>
<div class="ic" style="left:331px;top:593px"><svg width="12" height="13" viewBox="0 0 12 13"><path d="M1.300 1.300c1.700-1 3.200 1 4.700 0.300s3 0.600 5 1.700l-6 6.500z" fill="#db6472"/><path d="M3.500 2.800c1 0.300 1.800 0.800 3 0.500l-1.500 2.500z" fill="#f6c0c4"/><path d="M6.500 4.500l2-0.500l-2 2z" fill="#ee9aa2"/><path d="M1.300 1.300l4.200 10.700" stroke="#6a3038" stroke-width="1.100"/></svg></div>
<div class="t" style="left:350px;top:592px;">Процесс анализа письма</div>
<div class="btn" style="left:692px;top:592px;width:16px;height:16px"><svg width="7" height="4" viewBox="0 0 7 4" style="position:absolute;left:4px;top:6px"><path d="M0 0h7l-3.500 4z" fill="#000"/></svg></div>
<div style="left:286px;top:631px;width:13px;height:13px;background:#fff;border:1px solid;border-color:#848284 #ffffff #ffffff #848284;box-shadow:inset 1px 1px 0 #424142, inset -1px -1px 0 #d6d3ce;"></div>
<div class="t" style="left:304px;top:624px;">Фиксировать ошибки журналирования и запуска скриптов в</div>
<div class="t" style="left:304px;top:637px;">локальном Event Log</div>
<div class="btn" style="left:518px;top:678px;width:75px;height:23px;"><span>OK</span></div>
<div class="btn" style="left:599px;top:678px;width:75px;height:23px;"><span>Отмена</span></div>
<div class="btn" style="left:680px;top:678px;width:75px;height:23px;"><span>Справка</span></div>
<div class="win" style="left:257px;top:140px;width:512px;height:461px"></div>
<div style="left:260px;top:143px;width:506px;height:18px;background:linear-gradient(90deg,#08246b,#a5cbf7)"></div>
<div class="t" style="left:262px;top:144px;color:#fff;font-weight:bold;font-size:11.5px;letter-spacing:0.25px">Обрабатываемые события</div>
<div class="capbtn" style="left:748px;top:145px;width:16px;height:14px"><svg width="8" height="7" viewBox="0 0 8 7"><path d="M0 0h2l2 2l2-2h2l-3 3.500l3 3.500h-2l-2-2l-2 2h-2l3-3.500z" fill="#000"/></svg></div>
<div style="left:282px;top:184px;width:464px;height:344px;background:#fff;border:1px solid;border-color:#848284 #ffffff #ffffff #848284;box-shadow:inset 1px 1px 0 #424142, inset -1px -1px 0 #d6d3ce;"></div>
<div class="clip" style="left:284px;top:186px;width:444px;height:340px">
<div class="hd" style="left:12px;top:8px;width:11px"></div>
<div class="cb" style="left:24px;top:2px"></div>
<div class="ic" style="left:40px;top:1px"><svg width="12" height="13" viewBox="0 0 12 13"><path d="M1.300 1.300c1.700-1 3.200 1 4.700 0.300s3 0.600 5 1.700l-6 6.500z" fill="#db6472"/><path d="M3.500 2.800c1 0.300 1.800 0.800 3 0.500l-1.500 2.500z" fill="#f6c0c4"/><path d="M6.500 4.500l2-0.500l-2 2z" fill="#ee9aa2"/><path d="M1.300 1.300l4.200 10.700" stroke="#6a3038" stroke-width="1.100"/></svg></div>
<div class="t" style="left:58px;top:0px;">Просмотр пользователем данных сообщения</div>
<div class="hd" style="left:12px;top:24px;width:11px"></div>
<div class="cb" style="left:24px;top:18px"></div>
<div class="ic" style="left:40px;top:17px"><svg width="12" height="13" viewBox="0 0 12 13"><path d="M1.300 1.300c1.700-1 3.200 1 4.700 0.300s3 0.600 5 1.700l-6 6.500z" fill="#db6472"/><path d="M3.500 2.800c1 0.300 1.800 0.800 3 0.500l-1.500 2.500z" fill="#f6c0c4"/><path d="M6.500 4.500l2-0.500l-2 2z" fill="#ee9aa2"/><path d="M1.300 1.300l4.200 10.700" stroke="#6a3038" stroke-width="1.100"/></svg></div>
<div class="t" style="left:58px;top:16px;">Сообщение из карантина отправлено автоматически</div>
<div class="hd" style="left:12px;top:40px;width:11px"></div>
<div class="cb" style="left:24px;top:34px"></div>
<div class="ic" style="left:40px;top:33px"><svg width="12" height="13" viewBox="0 0 12 13"><path d="M1.300 1.300c1.700-1 3.200 1 4.700 0.300s3 0.600 5 1.700l-6 6.500z" fill="#db6472"/><path d="M3.500 2.800c1 0.300 1.800 0.800 3 0.500l-1.500 2.500z" fill="#f6c0c4"/><path d="M6.500 4.500l2-0.500l-2 2z" fill="#ee9aa2"/><path d="M1.300 1.300l4.200 10.700" stroke="#6a3038" stroke-width="1.100"/></svg></div>
<div class="t" style="left:58px;top:32px;">Сообщение из карантина отправлено пользователем</div>
<div class="hd" style="left:12px;top:56px;width:11px"></div>
<div class="cb" style="left:24px;top:50px"></div>
<div class="ic" style="left:40px;top:49px"><svg width="12" height="13" viewBox="0 0 12 13"><path d="M1.300 1.300c1.700-1 3.200 1 4.700 0.300s3 0.600 5 1.700l-6 6.500z" fill="#db6472"/><path d="M3.500 2.800c1 0.300 1.800 0.800 3 0.500l-1.500 2.500z" fill="#f6c0c4"/><path d="M6.500 4.500l2-0.500l-2 2z" fill="#ee9aa2"/><path d="M1.300 1.300l4.200 10.700" stroke="#6a3038" stroke-width="1.100"/></svg></div>
<div class="t" style="left:58px;top:48px;">Сообщение отправлено из архива</div>
<div class="hd" style="left:12px;top:72px;width:11px"></div>
<div class="cb" style="left:24px;top:66px"></div>
<div class="ic" style="left:40px;top:65px"><svg width="12" height="13" viewBox="0 0 12 13"><path d="M1.300 1.300c1.700-1 3.200 1 4.700 0.300s3 0.600 5 1.700l-6 6.500z" fill="#db6472"/><path d="M3.500 2.800c1 0.300 1.800 0.800 3 0.500l-1.500 2.500z" fill="#f6c0c4"/><path d="M6.500 4.500l2-0.500l-2 2z" fill="#ee9aa2"/><path d="M1.300 1.300l4.200 10.700" stroke="#6a3038" stroke-width="1.100"/></svg></div>
<div class="t" style="left:58px;top:64px;">Сообщение помещено в архив</div>
<div class="hd" style="left:12px;top:88px;width:11px"></div>
<div class="cb" style="left:24px;top:82px"></div>
<div class="ic" style="left:40px;top:81px"><svg width="12" height="13" viewBox="0 0 12 13"><path d="M1.300 1.300c1.700-1 3.200 1 4.700 0.300s3 0.600 5 1.700l-6 6.500z" fill="#db6472"/><path d="M3.500 2.800c1 0.300 1.800 0.800 3 0.500l-1.500 2.500z" fill="#f6c0c4"/><path d="M6.500 4.500l2-0.500l-2 2z" fill="#ee9aa2"/><path d="M1.300 1.300l4.200 10.700" stroke="#6a3038" stroke-width="1.100"/></svg></div>
<div class="t" style="left:58px;top:80px;">Сообщение помещено в карантин</div>
<div class="hd" style="left:12px;top:104px;width:11px"></div>
<div class="cb" style="left:24px;top:98px"></div>
<div class="ic" style="left:40px;top:97px"><svg width="12" height="13" viewBox="0 0 12 13"><path d="M1.300 1.300c1.700-1 3.200 1 4.700 0.300s3 0.600 5 1.700l-6 6.500z" fill="#db6472"/><path d="M3.500 2.800c1 0.300 1.800 0.800 3 0.500l-1.500 2.500z" fill="#f6c0c4"/><path d="M6.500 4.500l2-0.500l-2 2z" fill="#ee9aa2"/><path d="M1.300 1.300l4.200 10.700" stroke="#6a3038" stroke-width="1.100"/></svg></div>
<div class="t" style="left:58px;top:96px;">Сообщение удалено</div>
<div class="cb" style="left:5px;top:114px"></div>
<div class="ic" style="left:20px;top:113px"><svg width="16" height="14" viewBox="0 0 16 14"><defs><linearGradient id="fg" x1="0" y1="0" x2="1" y2="1"><stop offset="0" stop-color="#fffcd8"/><stop offset="0.450" stop-color="#fbe88c"/><stop offset="1" stop-color="#dc9c18"/></linearGradient></defs><path d="M0.500 2.500h5l1.500 1.500h8.500v9.500h-15z" fill="url(#fg)" stroke="#b89838"/></svg></div>
<div class="t" style="left:39px;top:112px;">Веб-службы</div>
<div class="hd" style="left:12px;top:136px;width:11px"></div>
<div class="cb" style="left:24px;top:130px"></div>
<div class="ic" style="left:40px;top:129px"><svg width="12" height="13" viewBox="0 0 12 13"><path d="M1.300 1.300c1.700-1 3.200 1 4.700 0.300s3 0.600 5 1.700l-6 6.500z" fill="#db6472"/><path d="M3.500 2.800c1 0.300 1.800 0.800 3 0.500l-1.500 2.500z" fill="#f6c0c4"/><path d="M6.500 4.500l2-0.500l-2 2z" fill="#ee9aa2"/><path d="M1.300 1.300l4.200 10.700" stroke="#6a3038" stroke-width="1.100"/></svg></div>
<div class="t" style="left:58px;top:128px;">Изменение настроек</div>
<div class="hd" style="left:12px;top:152px;width:11px"></div>
<div class="cb" style="left:24px;top:146px"></div>
<div class="ic" style="left:40px;top:145px"><svg width="12" height="13" viewBox="0 0 12 13"><path d="M1.300 1.300c1.700-1 3.200 1 4.700 0.300s3 0.600 5 1.700l-6 6.500z" fill="#db6472"/><path d="M3.500 2.800c1 0.300 1.800 0.800 3 0.500l-1.500 2.500z" fill="#f6c0c4"/><path d="M6.500 4.500l2-0.500l-2 2z" fill="#ee9aa2"/><path d="M1.300 1.300l4.200 10.700" stroke="#6a3038" stroke-width="1.100"/></svg></div>
<div class="t" style="left:58px;top:144px;">Сбои при работе модуля</div>
<div class="cb" style="left:5px;top:162px"></div>
<div class="ic" style="left:20px;top:161px"><svg width="16" height="14" viewBox="0 0 16 14"><defs><linearGradient id="fg" x1="0" y1="0" x2="1" y2="1"><stop offset="0" stop-color="#fffcd8"/><stop offset="0.450" stop-color="#fbe88c"/><stop offset="1" stop-color="#dc9c18"/></linearGradient></defs><path d="M0.500 2.500h5l1.500 1.500h8.500v9.500h-15z" fill="url(#fg)" stroke="#b89838"/></svg></div>
<div class="t" style="left:39px;top:160px;">Общие</div>
<div class="hd" style="left:12px;top:184px;width:11px"></div>
<div class="cb" style="left:24px;top:178px"><svg width="7" height="7" viewBox="0 0 7 7" style="position:absolute;left:1px;top:1px"><path d="M0 2v3l2 2l5-5v-3l-5 5z" fill="#000"/></svg></div>
<div class="ic" style="left:40px;top:177px"><svg width="12" height="13" viewBox="0 0 12 13"><path d="M1.300 1.300c1.700-1 3.200 1 4.700 0.300s3 0.600 5 1.700l-6 6.500z" fill="#db6472"/><path d="M3.500 2.800c1 0.300 1.800 0.800 3 0.500l-1.500 2.500z" fill="#f6c0c4"/><path d="M6.500 4.500l2-0.500l-2 2z" fill="#ee9aa2"/><path d="M1.300 1.300l4.200 10.700" stroke="#6a3038" stroke-width="1.100"/></svg></div>
<div style="left:57px;top:176px;width:110px;height:16px;background:#0a246a;outline:1px dotted #f5db95;outline-offset:-1px"></div>
<div class="t" style="left:58px;top:176px;color:#fff">Изменение настроек</div>
<div class="hd" style="left:12px;top:200px;width:11px"></div>
<div class="cb" style="left:24px;top:194px"></div>
<div class="ic" style="left:40px;top:193px"><svg width="12" height="13" viewBox="0 0 12 13"><path d="M1.300 1.300c1.700-1 3.200 1 4.700 0.300s3 0.600 5 1.700l-6 6.500z" fill="#db6472"/><path d="M3.500 2.800c1 0.300 1.800 0.800 3 0.500l-1.500 2.500z" fill="#f6c0c4"/><path d="M6.500 4.500l2-0.500l-2 2z" fill="#ee9aa2"/><path d="M1.300 1.300l4.200 10.700" stroke="#6a3038" stroke-width="1.100"/></svg></div>
<div class="t" style="left:58px;top:192px;">Изменение настроек журналирования и запуска скриптов</div>
<div class="hd" style="left:12px;top:216px;width:11px"></div>
<div class="cb" style="left:24px;top:210px"><svg width="7" height="7" viewBox="0 0 7 7" style="position:absolute;left:1px;top:1px"><path d="M0 2v3l2 2l5-5v-3l-5 5z" fill="#000"/></svg></div>
<div class="ic" style="left:40px;top:209px"><svg width="12" height="13" viewBox="0 0 12 13"><path d="M1.300 1.300c1.700-1 3.200 1 4.700 0.300s3 0.600 5 1.700l-6 6.500z" fill="#db6472"/><path d="M3.500 2.800c1 0.300 1.800 0.800 3 0.500l-1.500 2.500z" fill="#f6c0c4"/><path d="M6.500 4.500l2-0.500l-2 2z" fill="#ee9aa2"/><path d="M1.300 1.300l4.200 10.700" stroke="#6a3038" stroke-width="1.100"/></svg></div>
<div class="t" style="left:58px;top:208px;">Изменение прав доступа</div>
<div class="hd" style="left:12px;top:232px;width:11px"></div>
<div class="cb" style="left:24px;top:226px"></div>
<div class="ic" style="left:40px;top:225px"><svg width="12" height="13" viewBox="0 0 12 13"><path d="M1.300 1.300c1.700-1 3.200 1 4.700 0.300s3 0.600 5 1.700l-6 6.500z" fill="#db6472"/><path d="M3.500 2.800c1 0.300 1.800 0.800 3 0.500l-1.500 2.500z" fill="#f6c0c4"/><path d="M6.500 4.500l2-0.500l-2 2z" fill="#ee9aa2"/><path d="M1.300 1.300l4.200 10.700" stroke="#6a3038" stroke-width="1.100"/></svg></div>
<div class="t" style="left:58px;top:224px;">Разрыв соединения</div>
<div class="hd" style="left:12px;top:248px;width:11px"></div>
<div class="cb" style="left:24px;top:242px"></div>
<div class="ic" style="left:40px;top:241px"><svg width="12" height="13" viewBox="0 0 12 13"><path d="M1.300 1.300c1.700-1 3.200 1 4.700 0.300s3 0.600 5 1.700l-6 6.500z" fill="#db6472"/><path d="M3.500 2.800c1 0.300 1.800 0.800 3 0.500l-1.500 2.500z" fill="#f6c0c4"/><path d="M6.500 4.500l2-0.500l-2 2z" fill="#ee9aa2"/><path d="M1.300 1.300l4.200 10.700" stroke="#6a3038" stroke-width="1.100"/></svg></div>
<div class="t" style="left:58px;top:240px;">Управление сервером</div>
<div class="hd" style="left:12px;top:264px;width:11px"></div>
<div class="cb" style="left:24px;top:258px"><svg width="7" height="7" viewBox="0 0 7 7" style="position:absolute;left:1px;top:1px"><path d="M0 2v3l2 2l5-5v-3l-5 5z" fill="#000"/></svg></div>
<div class="ic" style="left:40px;top:257px"><svg width="12" height="13" viewBox="0 0 12 13"><path d="M1.300 1.300c1.700-1 3.200 1 4.700 0.300s3 0.600 5 1.700l-6 6.500z" fill="#db6472"/><path d="M3.500 2.800c1 0.300 1.800 0.800 3 0.500l-1.500 2.500z" fill="#f6c0c4"/><path d="M6.500 4.500l2-0.500l-2 2z" fill="#ee9aa2"/><path d="M1.300 1.300l4.200 10.700" stroke="#6a3038" stroke-width="1.100"/></svg></div>
<div class="t" style="left:58px;top:256px;">Установка соединения</div>
<div class="cb" style="left:5px;top:274px"></div>
<div class="ic" style="left:20px;top:273px"><svg width="16" height="14" viewBox="0 0 16 14"><defs><linearGradient id="fg" x1="0" y1="0" x2="1" y2="1"><stop offset="0" stop-color="#fffcd8"/><stop offset="0.450" stop-color="#fbe88c"/><stop offset="1" stop-color="#dc9c18"/></linearGradient></defs><path d="M0.500 2.500h5l1.500 1.500h8.500v9.500h-15z" fill="url(#fg)" stroke="#b89838"/></svg></div>
<div class="t" style="left:39px;top:272px;">Передача сообщений</div>
<div class="hd" style="left:12px;top:296px;width:11px"></div>
<div class="cb" style="left:24px;top:290px"></div>
<div class="ic" style="left:40px;top:289px"><svg width="12" height="13" viewBox="0 0 12 13"><path d="M1.300 1.300c1.700-1 3.200 1 4.700 0.300s3 0.600 5 1.700l-6 6.500z" fill="#db6472"/><path d="M3.500 2.800c1 0.300 1.800 0.800 3 0.500l-1.500 2.500z" fill="#f6c0c4"/><path d="M6.500 4.500l2-0.500l-2 2z" fill="#ee9aa2"/><path d="M1.300 1.300l4.200 10.700" stroke="#6a3038" stroke-width="1.100"/></svg></div>
<div class="t" style="left:58px;top:288px;">Изменение настроек</div>
<div class="hd" style="left:12px;top:312px;width:11px"></div>
<div class="cb" style="left:24px;top:306px"></div>
<div class="ic" style="left:40px;top:305px"><svg width="12" height="13" viewBox="0 0 12 13"><path d="M1.300 1.300c1.700-1 3.200 1 4.700 0.300s3 0.600 5 1.700l-6 6.500z" fill="#db6472"/><path d="M3.500 2.800c1 0.300 1.800 0.800 3 0.500l-1.500 2.500z" fill="#f6c0c4"/><path d="M6.500 4.500l2-0.500l-2 2z" fill="#ee9aa2"/><path d="M1.300 1.300l4.200 10.700" stroke="#6a3038" stroke-width="1.100"/></svg></div>
<div class="t" style="left:58px;top:304px;">Не удалось доставить сообщение</div>
<div class="hd" style="left:12px;top:328px;width:11px"></div>
<div class="cb" style="left:24px;top:322px"></div>
<div class="ic" style="left:40px;top:321px"><svg width="12" height="13" viewBox="0 0 12 13"><path d="M1.300 1.300c1.700-1 3.200 1 4.700 0.300s3 0.600 5 1.700l-6 6.500z" fill="#db6472"/><path d="M3.500 2.800c1 0.300 1.800 0.800 3 0.500l-1.500 2.500z" fill="#f6c0c4"/><path d="M6.500 4.500l2-0.500l-2 2z" fill="#ee9aa2"/><path d="M1.300 1.300l4.200 10.700" stroke="#6a3038" stroke-width="1.100"/></svg></div>
<div class="t" style="left:58px;top:320px;">Сбои при работе модуля</div>
<div class="cb" style="left:5px;top:338px"></div>
<div class="ic" style="left:20px;top:337px"><svg width="16" height="14" viewBox="0 0 16 14"><defs><linearGradient id="fg" x1="0" y1="0" x2="1" y2="1"><stop offset="0" stop-color="#fffcd8"/><stop offset="0.450" stop-color="#fbe88c"/><stop offset="1" stop-color="#dc9c18"/></linearGradient></defs><path d="M0.500 2.500h5l1.500 1.500h8.500v9.500h-15z" fill="url(#fg)" stroke="#b89838"/></svg></div>
<div class="t" style="left:39px;top:336px;">Прием сообщений</div>
<div class="vd" style="left:11px;top:0px;height:104px"></div>
<div class="vd" style="left:11px;top:128px;height:24px"></div>
<div class="vd" style="left:11px;top:174px;height:90px"></div>
<div class="vd" style="left:11px;top:286px;height:42px"></div>
</div>
<div style="left:728px;top:186px;width:16px;height:340px;background-image:repeating-conic-gradient(#fff 0% 25%, #d6d3ce 0% 50%);background-size:2px 2px;"></div>
<div class="btn" style="left:728px;top:186px;width:16px;height:16px"><svg width="7" height="4" viewBox="0 0 7 4" style="position:absolute;left:3px;top:5px"><path d="M0 4h7l-3.500-4z" fill="#000"/></svg></div>
<div class="btn" style="left:728px;top:510px;width:16px;height:16px"><svg width="7" height="4" viewBox="0 0 7 4" style="position:absolute;left:3px;top:5px"><path d="M0 0h7l-3.500 4z" fill="#000"/></svg></div>
<div class="btn" style="left:728px;top:227px;width:16px;height:175px"></div>
<div style="left:271px;top:551px;width:485px;height:1px;background:#848284"></div>
<div style="left:271px;top:552px;width:485px;height:1px;background:#ffffff"></div>
<div class="btn" style="left:435px;top:565px;width:75px;height:23px;"><span>&lt; <u>Н</u>азад</span></div>
<div class="btn def" style="left:510px;top:565px;width:75px;height:23px;"><div class="btnin"><span>Готово</span></div></div>
<div class="btn" style="left:595px;top:565px;width:75px;height:23px;"><span>Отмена</span></div>
<div class="btn" style="left:681px;top:565px;width:75px;height:23px;"><span>Справка</span></div>
</body></html>
